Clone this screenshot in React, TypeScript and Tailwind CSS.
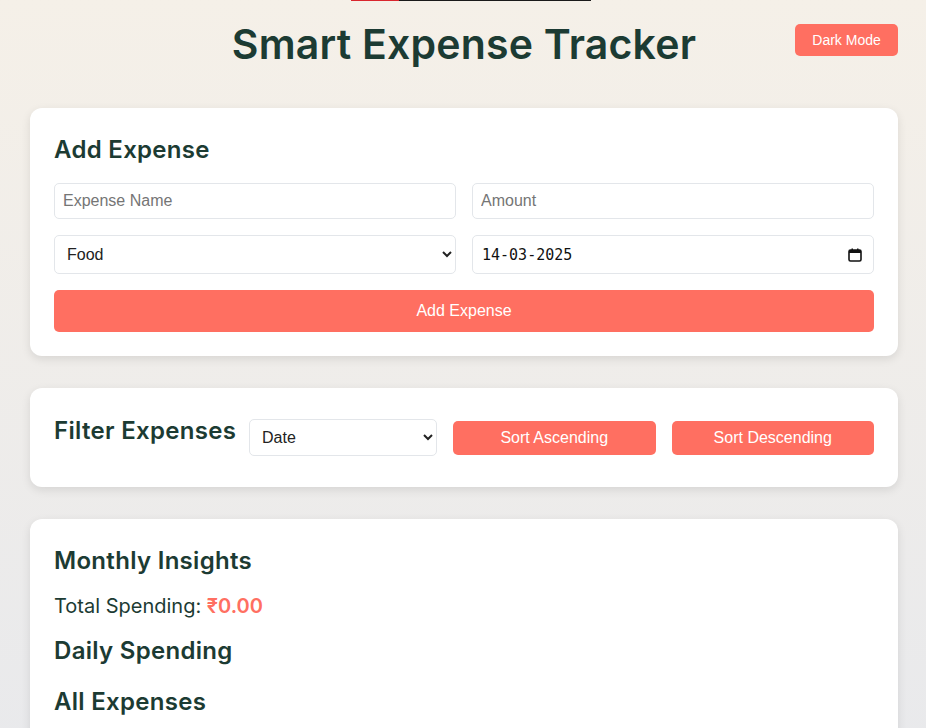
import React from "react";

const heading = "font-['Inter',sans-serif] font-semibold text-[#1c3b33] text-[24px] leading-[32px] tracking-[0.3px]";
const field =
  "rounded-[5px] border border-[#e3e6ea] bg-white px-2 text-[16px] text-[#222] outline-none font-['Liberation_Sans',Arial,sans-serif] placeholder:text-[#757575]";
const coralBtn =
  "rounded-[5px] bg-[#ff6f61] text-white font-['Liberation_Sans',Arial,sans-serif]";

function Card({ children, className = "" }: { children: React.ReactNode; className?: string }) {
  return (
    <div
      className={`rounded-xl bg-white px-6 shadow-[0_3px_10px_rgba(0,0,0,0.1)] ${className}`}
    >
      {children}
    </div>
  );
}

function CalendarIcon() {
  return (
    <svg width="14" height="14" viewBox="0 0 14 14" aria-hidden="true">
      <rect x="1" y="2" width="12" height="11" rx="1.5" fill="none" stroke="#111" strokeWidth="1.6" />
      <rect x="1" y="2" width="12" height="3" fill="#111" />
      <rect x="3.5" y="0.5" width="1.5" height="2.5" fill="#111" />
      <rect x="9" y="0.5" width="1.5" height="2.5" fill="#111" />
    </svg>
  );
}

export default function App() {
  const [name, setName] = React.useState("");
  const [amount, setAmount] = React.useState("");
  const [category, setCategory] = React.useState("Food");
  const [date, setDate] = React.useState("14-03-2025");
  const [sortBy, setSortBy] = React.useState("Date");

  return (
    <div className="min-h-screen bg-gradient-to-b from-[#f5f0e8] to-[#e8e9ec] pb-10 font-['Inter',sans-serif]">
      <div className="ml-[351px] flex h-px w-[240px]">
        <div className="w-12 bg-[#d9262e]" />
        <div className="flex-1 bg-[#1a1a1a]" />
      </div>

      <header className="relative ml-[30px] flex h-[107px] w-[868px] items-start justify-center pt-[13px]">
        <h1 className="font-['Inter',sans-serif] text-[41px] font-semibold tracking-[0.2px] text-[#1c3b33]">
          Smart Expense Tracker
        </h1>
        <button
          type="button"
          className={`${coralBtn} absolute right-0 top-[23px] h-8 w-[103px] text-[14px]`}
        >
          Dark Mode
        </button>
      </header>

      <div className="ml-[30px] flex w-[868px] flex-col gap-8">
        <Card className="pt-[26px] pb-6">
          <h2 className={heading}>Add Expense</h2>
          <div className="mt-[17px] grid grid-cols-2 gap-x-4 gap-y-4">
            <input
              className={`${field} h-9 w-full`}
              placeholder="Expense Name"
              value={name}
              onChange={(e) => setName(e.target.value)}
            />
            <input
              className={`${field} h-9 w-full`}
              placeholder="Amount"
              value={amount}
              onChange={(e) => setAmount(e.target.value)}
            />
            <select
              className={`${field} h-[39px] w-full`}
              value={category}
              onChange={(e) => setCategory(e.target.value)}
            >
              <option>Food</option>
              <option>Transport</option>
              <option>Shopping</option>
              <option>Bills</option>
              <option>Other</option>
            </select>
            <div className="flex h-[39px] items-center rounded-[5px] border border-[#e3e6ea] bg-white pr-[11px]">
              <input
                className="h-full min-w-0 flex-1 bg-transparent pl-[9px] font-['DejaVu_Sans_Mono',monospace] text-[15px] text-[#111] outline-none"
                value={date}
                onChange={(e) => setDate(e.target.value)}
              />
              <CalendarIcon />
            </div>
          </div>
          <button type="button" className={`${coralBtn} mt-4 h-[42px] w-full text-[16px]`}>
            Add Expense
          </button>
        </Card>

        <Card className="flex h-[99px] items-center gap-4">
          <h2 className={`${heading} -mt-[14px] w-[179px] shrink-0 whitespace-nowrap`}>Filter Expenses</h2>
          <select
            className={`${field} h-[37px] w-[188px] shrink-0`}
            value={sortBy}
            onChange={(e) => setSortBy(e.target.value)}
          >
            <option>Date</option>
            <option>Amount</option>
            <option>Category</option>
          </select>
          <button type="button" className={`${coralBtn} h-[34px] min-w-0 flex-1 whitespace-nowrap text-[16px]`}>
            Sort Ascending
          </button>
          <button type="button" className={`${coralBtn} h-[34px] min-w-0 flex-1 whitespace-nowrap text-[16px]`}>
            Sort Descending
          </button>
        </Card>

        <Card className="pt-[26px] pb-8">
          <h2 className={heading}>Monthly Insights</h2>
          <p className="mt-[14px] text-[20px] text-[#1c3b33]">
            Total Spending: <span className="font-semibold text-[#ff6f61]">₹0.00</span>
          </p>
          <h2 className={`${heading} mt-[14px]`}>Daily Spending</h2>
          <h2 className={`${heading} mt-[19px]`}>All Expenses</h2>
        </Card>
      </div>
    </div>
  );
}
